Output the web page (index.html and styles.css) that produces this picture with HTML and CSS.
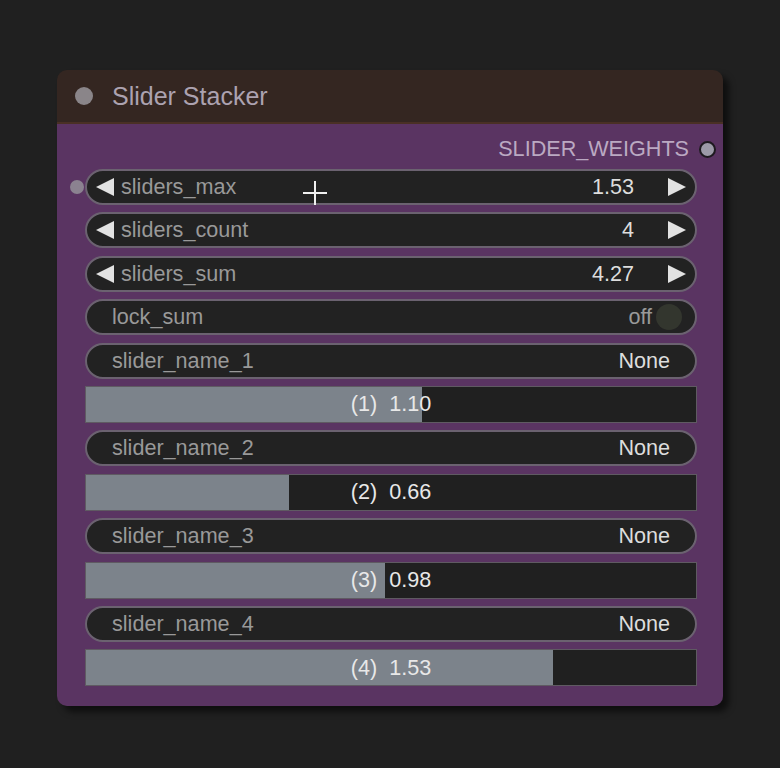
FILE: index.html
```html
<!DOCTYPE html>
<html>
<head>
<meta charset="utf-8">
<link rel="stylesheet" href="styles.css">
</head>
<body>
<div class="canvas">
  <div class="node">
    <div class="node-header">
      <span class="collapse-dot"></span>
      <span class="node-title">Slider Stacker</span>
    </div>
    <div class="node-body">
      <div class="output-row">
        <span class="slot-label">SLIDER_WEIGHTS</span>
        <span class="output-dot"></span>
      </div>
      <div class="widgets">
        <div class="pill number has-input">
          <span class="input-dot"></span>
          <svg class="arrow" viewBox="0 0 18 18"><polygon points="18,0 0,9 18,18"/></svg>
          <span class="label">sliders_max</span>
          <span class="value">1.53</span>
          <svg class="arrow" viewBox="0 0 18 18"><polygon points="0,0 18,9 0,18"/></svg>
        </div>
        <div class="pill number">
          <svg class="arrow" viewBox="0 0 18 18"><polygon points="18,0 0,9 18,18"/></svg>
          <span class="label">sliders_count</span>
          <span class="value">4</span>
          <svg class="arrow" viewBox="0 0 18 18"><polygon points="0,0 18,9 0,18"/></svg>
        </div>
        <div class="pill number">
          <svg class="arrow" viewBox="0 0 18 18"><polygon points="18,0 0,9 18,18"/></svg>
          <span class="label">sliders_sum</span>
          <span class="value">4.27</span>
          <svg class="arrow" viewBox="0 0 18 18"><polygon points="0,0 18,9 0,18"/></svg>
        </div>
        <div class="pill toggle">
          <span class="label">lock_sum</span>
          <span class="off">off</span>
          <span class="knob"></span>
        </div>
        <div class="pill combo">
          <span class="label">slider_name_1</span>
          <span class="value">None</span>
        </div>
        <div class="bar">
          <div class="fill" style="width:55%"></div>
          <div class="bar-text">(1)  1.10</div>
        </div>
        <div class="pill combo">
          <span class="label">slider_name_2</span>
          <span class="value">None</span>
        </div>
        <div class="bar">
          <div class="fill" style="width:33.2%"></div>
          <div class="bar-text">(2)  0.66</div>
        </div>
        <div class="pill combo">
          <span class="label">slider_name_3</span>
          <span class="value">None</span>
        </div>
        <div class="bar">
          <div class="fill" style="width:49%"></div>
          <div class="bar-text">(3)  0.98</div>
        </div>
        <div class="pill combo">
          <span class="label">slider_name_4</span>
          <span class="value">None</span>
        </div>
        <div class="bar">
          <div class="fill" style="width:76.6%"></div>
          <div class="bar-text">(4)  1.53</div>
        </div>
      </div>
    </div>
  </div>
  <svg class="cursor" viewBox="0 0 26 26"><path d="M13 1V25M1 13H25"/></svg>
</div>
</body>
</html>
```
FILE: styles.css
```css
html, body {
  margin: 0;
  padding: 0;
}
body {
  background: #202020;
  font-family: "Liberation Sans", Arial, sans-serif;
  width: 780px;
  height: 768px;
  overflow: hidden;
}
.canvas {
  position: relative;
  width: 780px;
  height: 768px;
  padding-top: 70px;
  padding-left: 57px;
  box-sizing: border-box;
}
.node {
  width: 666px;
  border-radius: 10px;
  overflow: hidden;
  box-shadow: 6px 6px 6px rgba(0, 0, 0, 0.55);
}
.node-header {
  height: 54px;
  background: #342621;
  display: flex;
  align-items: center;
  padding-left: 18px;
  box-sizing: border-box;
  border-bottom: 2px solid #4a3025;
}
.collapse-dot {
  width: 18px;
  height: 18px;
  border-radius: 50%;
  background: #8a8589;
  margin-right: 19px;
}
.node-title {
  font-size: 25px;
  color: #aca2b0;
  line-height: 1;
}
.node-body {
  background: #5a3462;
  padding: 7px 0 20px 0;
}
.output-row {
  height: 36px;
  display: flex;
  align-items: center;
  justify-content: flex-end;
  padding-right: 7px;
  margin-bottom: 2px;
}
.slot-label {
  font-size: 21.6px;
  color: #bba9c2;
  margin-right: 10px;
}
.output-dot {
  width: 13px;
  height: 13px;
  border-radius: 50%;
  background: #9c9aa8;
  border: 2px solid #1e1a20;
}
.widgets {
  display: flex;
  flex-direction: column;
  gap: 7.4px;
  margin: 0 26px 0 28px;
}
.pill {
  position: relative;
  height: 36px;
  box-sizing: border-box;
  border: 2px solid #6b6270;
  border-radius: 18px;
  background: #222;
  display: flex;
  align-items: center;
  font-size: 21.6px;
}
.label {
  color: #999;
  flex: 1;
  white-space: nowrap;
}
.value {
  color: #ddd;
  white-space: nowrap;
}
.number {
  padding: 0 9px;
}
.number .label {
  margin-left: 7px;
}
.number .value {
  margin-right: 34px;
}
.arrow {
  width: 18px;
  height: 18px;
  flex: none;
}
.arrow polygon {
  fill: #e2e2e2;
}
.input-dot {
  position: absolute;
  left: -17px;
  top: 9px;
  width: 14px;
  height: 14px;
  border-radius: 50%;
  background: #8b8290;
}
.combo {
  padding: 0 25px;
}
.toggle {
  padding: 0 13px 0 25px;
}
.off {
  color: #999;
  margin-right: 4px;
}
.knob {
  width: 26px;
  height: 26px;
  border-radius: 50%;
  background: #33362e;
}
.bar {
  height: 37px;
  box-sizing: border-box;
  border: 1px solid #5f5a62;
  background: #202020;
  display: grid;
}
.fill {
  grid-area: 1 / 1;
  background: #7c838b;
  justify-self: start;
  height: 100%;
}
.bar-text {
  grid-area: 1 / 1;
  align-self: center;
  justify-self: center;
  font-size: 21.6px;
  color: #e8e8e8;
  white-space: pre;
}
.cursor {
  position: absolute;
  left: 302px;
  top: 180px;
  width: 26px;
  height: 26px;
}
.cursor path {
  stroke: #f0f0f0;
  stroke-width: 2;
  fill: none;
}
```
